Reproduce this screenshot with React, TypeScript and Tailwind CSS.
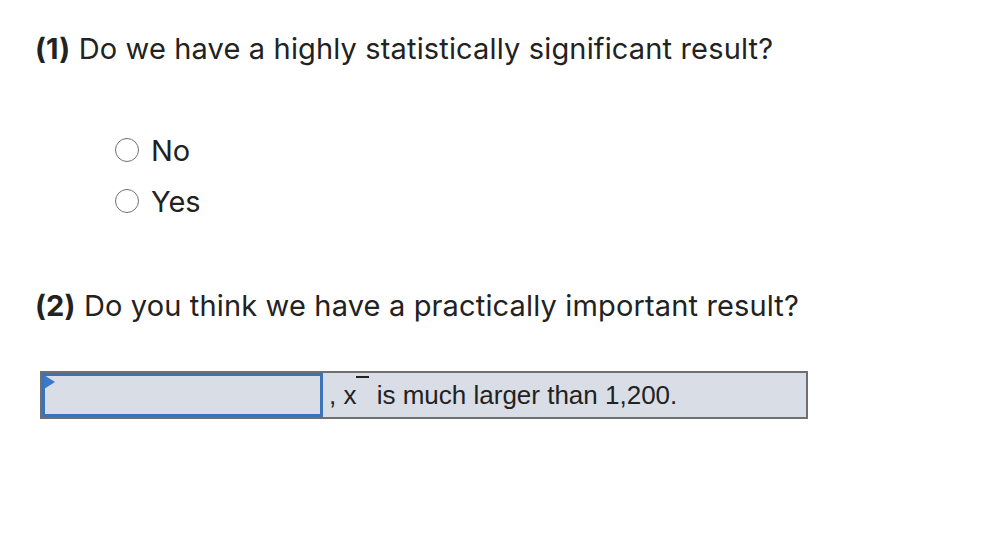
export default function App() {
  const heading = "text-[29px] tracking-[0.15px] text-[#222] leading-none";
  return (
    <div className="w-[1002px] h-[558px] bg-white font-['Inter',sans-serif]">
      <div className="pl-[35px] pt-[34px]">
        <p className={heading}>
          <span className="font-bold">(1)</span> Do we have a highly statistically significant result?
        </p>

        <div className="pl-[80px] pt-[73px] flex flex-col gap-[23px]">
          {["No", "Yes"].map((o) => (
            <label key={o} className="flex items-center gap-[12px] h-[28px] text-[29px] text-[#222] leading-none">
              <span className="w-[24px] h-[24px] rounded-full border-[1.5px] border-[#707070] bg-white" />
              {o}
            </label>
          ))}
        </div>

        <p className={`${heading} pt-[76px]`}>
          <span className="font-bold">(2)</span> Do you think we have a practically important result?
        </p>

        <div className="mt-[51px] ml-[5px] w-[768px] h-[48px] border-2 border-[#6f6f6f] bg-[#d9dde6] flex items-center font-['Liberation_Sans',Arial,sans-serif] text-[26px] text-[#222]">
          <div className="relative w-[281px] h-full border-[3px] border-[#3a73b8] bg-[#d9dde6]">
            <svg className="absolute left-[-1px] top-[-1px]" width="12" height="14" viewBox="0 0 12 14">
              <polygon points="0,0 11,7 0,14" fill="#3a78c9" />
            </svg>
          </div>
          <span className="pl-[6px] leading-none">
            , x<span className="relative top-[-26px] inline-block w-[13px] h-[2px] bg-[#222]" />
            {" "}is much larger than 1,200.
          </span>
        </div>
      </div>
    </div>
  );
}
